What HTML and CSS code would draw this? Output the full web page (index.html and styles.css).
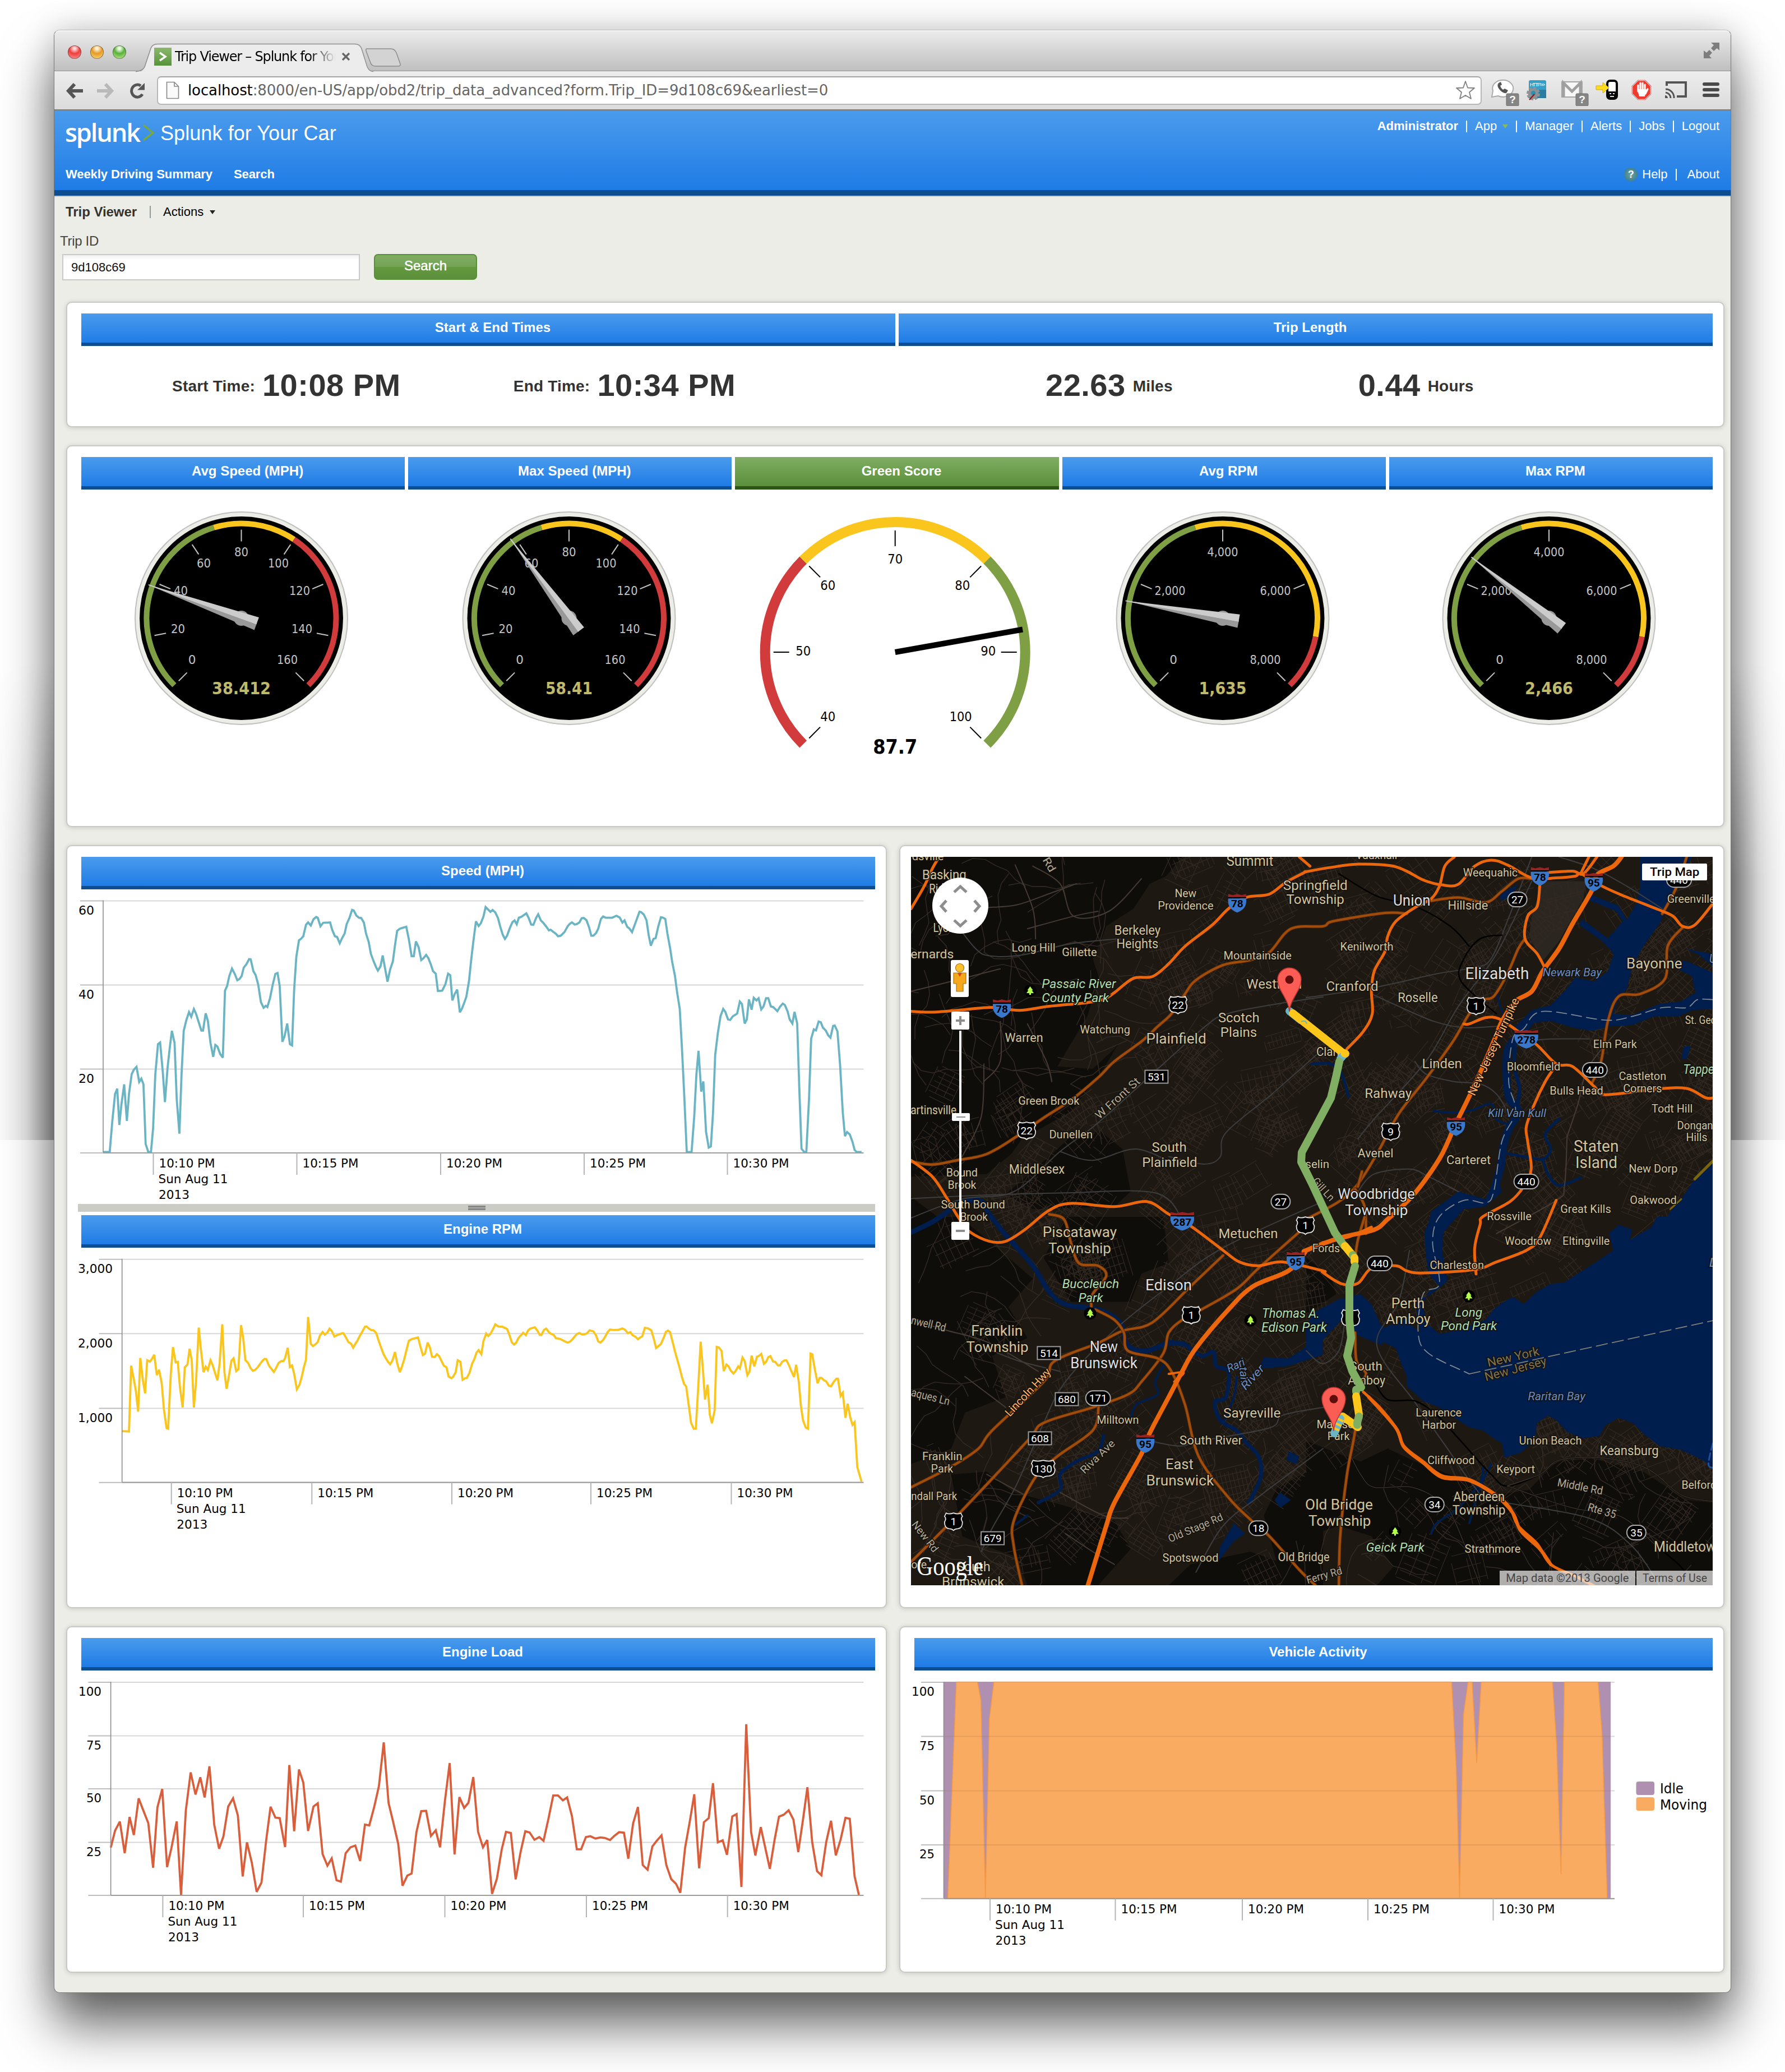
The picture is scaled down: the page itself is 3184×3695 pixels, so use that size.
FILE: index.html
```html
<!DOCTYPE html>
<html lang="en">
<head>
<meta charset="utf-8">
<title>Trip Viewer - Splunk for Your Car</title>
<link rel="stylesheet" href="styles.css">
</head>
<body>
<div class="window">
  <div class="titlebar">
    <div class="lights"><i class="light red"></i><i class="light amber"></i><i class="light green"></i></div>
    <div class="tab">
      <svg class="tab-shape" width="476" height="52" viewBox="0 0 476 52"><path d="M-30 50.500 H6 Q14 50 17 42 L28 9 Q31 2 40 2 H391 Q400 2 403 10 L414 42 Q417 50 425 50.500 H480 V54 H-30Z" fill="#ececec"/><path d="M0 50.500 Q12 50 16 42 L27 9 Q30 1.500 39 1.500 H391 Q400 1.500 403 10 L413 42 Q416 50 424 50.500" fill="none" stroke="#8f8f8f" stroke-width="1.500"/><path d="M412 10 H455 Q462 10 465 17 L472 37 Q473 41 468 41 H428 Q421 41 419 35 L411 14 Q410 10 412 10Z" fill="#d3d3d3" stroke="#8d8d8d" stroke-width="1.500"/></svg>
      <span class="favicon"><svg width="31" height="32" viewBox="0 0 31 32"><path d="M10 9 L20 16 L10 23" fill="none" stroke="#fff" stroke-width="3.500"/></svg></span>
      <span class="tab-title">Trip Viewer – Splunk for Your Car</span>
      <svg class="tab-close" width="16" height="16" viewBox="0 0 16 16"><path d="M2 2 L14 14 M14 2 L2 14" stroke="#666" stroke-width="3.200"/></svg>
    </div>
    <svg class="expand" width="30" height="30" viewBox="0 0 30 30"><path d="M14 1 H29 V15 L24.500 11 L19 16 L14 11 L19 5.500Z M1 15 L6 19 L11 14 L16 19 L11 24.500 L15 29 H1Z" fill="#7d7d7d"/></svg>
  </div>
  <div class="toolbar">
    <svg class="nav-icons" width="150" height="32" viewBox="0 0 150 32">
      <path d="M31 16 H6 M16 4 L5 16 L16 28" fill="none" stroke="#555" stroke-width="6"/>
      <path d="M56 16 H80 M71 4 L82 16 L71 28" fill="none" stroke="#b9b9b9" stroke-width="6"/>
      <path d="M137 22 A10.500 11 0 1 1 134 7" fill="none" stroke="#555" stroke-width="5"/><path d="M141 2 V14.500 H128Z" fill="#555"/>
    </svg>
    <div class="omnibox">
      <svg width="24" height="32" viewBox="0 0 24 32"><path d="M1.500 1.500 H15 L22.500 9 V30.500 H1.500Z M15 1.500 V9 H22.500" fill="#fafafa" stroke="#8b8b8b" stroke-width="1.700"/></svg>
      <span class="url"><b>localhost</b>:8000/en-US/app/obd2/trip_data_advanced?form.Trip_ID=9d108c69&amp;earliest=0</span>
      <svg width="36" height="36" viewBox="0 0 36 36"><path d="M18 2 L22 13.500 L34 14 L25 21.500 L28 33 L18 27 L8 33 L11 21.500 L2 14 L14 13.500Z" fill="#fff" stroke="#808080" stroke-width="1.800" stroke-linejoin="round"/></svg>
    </div>
    <svg class="extensions" width="424" height="56" viewBox="2653 134 424 56">
      <path d="M2661 174 L2663 163 A18.500 15 0 1 1 2672 172Z" fill="#fff" stroke="#aaa" stroke-width="2"/>
      <path d="M2673 149 Q2669 154 2675 161 Q2681 168 2687 167 L2690 162 L2684 159 L2681 161 Q2677 158 2676 154 L2679 152 L2677 147Z" fill="#555"/>
      <g id="badge"><rect x="2687" y="168" width="22" height="22" rx="2" fill="#858585" stroke="#6e6e6e"/><text x="2698" y="185" font-family="Liberation Sans" font-weight="700" font-size="19" fill="#fff" text-anchor="middle">?</text></g>
      <rect x="2727" y="144" width="31" height="32" rx="3" fill="#35a0c7"/><rect x="2727" y="161" width="31" height="15" fill="#2a7d9e"/>
      <text x="2742.500" y="155" font-family="Liberation Sans" font-size="9" fill="#fff" text-anchor="middle" textLength="27">HTTP&gt;&gt;</text>
      <circle cx="2735" cy="168" r="9.500" fill="#8f9294"/><circle cx="2735" cy="168" r="10" fill="none" stroke="#8f9294" stroke-width="4" stroke-dasharray="5 2.800"/><circle cx="2735" cy="167" r="4" fill="#2a8fb3"/><path d="M2737 169 L2728 179" stroke="#8a2020" stroke-width="2.500"/>
      <rect x="2786" y="147" width="36" height="27" fill="#f7f7f7" stroke="#a5a5a5" stroke-width="2"/><path d="M2789 174 V149 L2804 164 L2819 149 V174" fill="none" stroke="#a0a0a0" stroke-width="5"/>
      <use href="#badge" x="124"/>
      <rect x="2867" y="145" width="17" height="32" rx="5" fill="#fff" stroke="#000" stroke-width="4"/><rect x="2866" y="164" width="18" height="13" rx="4" fill="#000"/><path d="M2871 168 h3 m3 0 h3 M2872 173 h7" stroke="#ddd" stroke-width="2"/><path d="M2847 154 H2859 V148 L2870 157.500 L2859 167 V161 H2847Z" fill="#ffdc20" stroke="#d8a800"/>
      <path d="M2921 144 H2935 L2945 154 V169 L2935 179 H2921 L2911 169 V154Z" fill="#ee3a2f" stroke="#fff" stroke-width="2.500"/><path d="M2921 144 H2935 L2945 154 V169 L2935 179 H2921 L2911 169 V154Z" fill="none" stroke="#a33" stroke-width=".8"/>
      <path d="M2922 164 V153 M2926 163 V149 M2930 163 V149 M2934 163 V152 M2939 160 L2935 168" stroke="#fff" stroke-width="3.200" stroke-linecap="round"/><path d="M2920.500 160 H2937 L2934 173 H2924Z" fill="#fff"/>
      <path d="M2973 154 V148 H3007 V173 H2991" fill="none" stroke="#555" stroke-width="4"/><path d="M2971 160 A15 15 0 0 1 2986 176 M2971 166 A10 10 0 0 1 2980 176" fill="none" stroke="#555" stroke-width="3"/><path d="M2970 171 a5 5 0 0 1 5 5 h-5Z" fill="#555"/>
      <path d="M3040 151 H3064 M3040 161 H3064 M3040 171 H3064" stroke="#4a4a4a" stroke-width="6" stroke-linecap="round"/>
    </svg>
  </div>

  <header class="app-header">
    <div class="row top">
      <div class="brand"><span class="logo">splunk</span><svg width="22" height="34" viewBox="0 0 22 34"><path d="M2 4 L19 18 L2 31" fill="none" stroke="#76a844" stroke-width="3.500"/></svg><span class="app-name">Splunk for Your Car</span></div>
      <nav class="links"><strong>Administrator</strong><s></s><span>App</span><em class="caret"></em><s></s><span>Manager</span><s></s><span>Alerts</span><s></s><span>Jobs</span><s></s><span>Logout</span></nav>
    </div>
    <div class="row bottom">
      <nav class="menu"><b>Weekly Driving Summary</b><b>Search</b></nav>
      <nav class="links"><i class="help">?</i><span>Help</span><s></s><span class="about">About</span></nav>
    </div>
  </header>

  <main>
    <div class="view-row"><b>Trip Viewer</b><i class="divider"></i><span>Actions</span><i class="drop"></i></div>
    <div class="field-label">Trip ID</div>
    <div class="form-row"><div class="input">9d108c69</div><div class="button">Search</div></div>

    <section class="panel summary">
      <div class="bars two"><h2 class="bar">Start &amp; End Times</h2><h2 class="bar">Trip Length</h2></div>
      <div class="bars two">
        <div class="metrics times"><p><small>Start Time:</small><strong>10:08 PM</strong></p><p><small>End Time:</small><strong>10:34 PM</strong></p></div>
        <div class="metrics length"><p><strong>22.63</strong><small>Miles</small></p><p><strong>0.44</strong><small>Hours</small></p></div>
      </div>
    </section>

    <section class="panel gauges">
      <div class="bars five"><h2 class="bar">Avg Speed (MPH)</h2><h2 class="bar">Max Speed (MPH)</h2><h2 class="bar eco">Green Score</h2><h2 class="bar">Avg RPM</h2><h2 class="bar">Max RPM</h2></div>
      <svg id="gauges" width="2910" height="590" viewBox="145 872 2910 590"></svg>
    </section>

    <div class="columns">
      <section class="panel tall">
        <h2 class="bar">Speed (MPH)</h2>
        <svg id="speed" class="chart" width="1416" height="561" viewBox="145 1586 1416 561"></svg>
        <div class="splitter"><i></i></div>
        <h2 class="bar">Engine RPM</h2>
        <svg id="rpm" class="chart" width="1416" height="600" viewBox="145 2225 1416 600"></svg>
      </section>
      <section class="panel map-panel"><svg id="map" width="1430" height="1299" viewBox="1625 1528 1430 1299"></svg></section>
    </div>

    <div class="columns">
      <section class="panel short">
        <h2 class="bar">Engine Load</h2>
        <svg id="load" class="chart" width="1416" height="500" viewBox="145 2979 1416 500"></svg>
      </section>
      <section class="panel short">
        <h2 class="bar">Vehicle Activity</h2>
        <svg id="activity" class="chart" width="1424" height="500" viewBox="1631 2979 1424 500"></svg>
      </section>
    </div>
  </main>
</div>
<script src="app.js"></script>
</body>
</html>
```
FILE: styles.css
```css
* { box-sizing: border-box; }
body { margin: 0; background: #fff; height: 3695px; overflow: hidden; padding: 53px 0 0 96px; font-family: "Liberation Sans", Arial, sans-serif; position: relative; }
/* deeper side shadow along the middle of the window */
body::before, body::after { content: ""; position: absolute; top: 1180px; width: 96px; height: 853px; -webkit-mask-image: linear-gradient(transparent, #000 45%); mask-image: linear-gradient(transparent, #000 45%); }
body::before { left: 0; background: linear-gradient(90deg, rgba(0,0,0,.02), rgba(0,0,0,.09) 50%, rgba(0,0,0,.3)); }
body::after { right: 0; background: linear-gradient(270deg, rgba(0,0,0,.02), rgba(0,0,0,.09) 50%, rgba(0,0,0,.3)); }
h2, p { margin: 0; }
svg { display: block; flex: none; }
.window { position: relative; z-index: 1; width: 2992px; height: 3501px; border: 1px solid #777; border-top-color: #bbb; border-radius: 10px; background: #ecede6; box-shadow: 0 58px 92px rgba(0,0,0,.6), 0 0 60px rgba(0,0,0,.18); overflow: hidden; }

.titlebar { height: 73px; background: linear-gradient(#ebebeb, #bfbfbf); border-bottom: 1px solid #909090; border-top: 2px solid #f6f6f6; display: flex; align-items: flex-end; border-radius: 9px 9px 0 0; }
.lights { display: flex; gap: 16px; padding: 0 0 21px 24px; width: 145px; }
.light { width: 24px; height: 24px; border-radius: 50%; border: 1px solid rgba(0,0,0,.4); }
.red { background: radial-gradient(circle at 50% 20%, #ffd8d8 0 8%, #ec3f3c 45%, #ff9a98); }
.amber { background: radial-gradient(circle at 50% 20%, #fff2d8 0 8%, #e59a26 45%, #ffe07c); }
.green { background: radial-gradient(circle at 50% 20%, #efffe4 0 8%, #5bae3c 45%, #c2f390); }
.tab { width: 476px; height: 49px; position: relative; display: flex; align-items: center; padding-left: 33px; padding-bottom: 1px; }
.tab-shape { position: absolute; left: 0; top: 0; z-index: 0; overflow: hidden; }
.favicon { position: relative; width: 31px; height: 32px; background: linear-gradient(#8cb86c, #57933a); }
.tab-title { position: relative; margin-left: 6px; width: 290px; overflow: hidden; white-space: nowrap; font: 24px/34px "DejaVu Sans", sans-serif; letter-spacing: -1.2px; color: #000; -webkit-mask-image: linear-gradient(90deg, #000 82%, transparent 99%); mask-image: linear-gradient(90deg, #000 82%, transparent 99%); }
.tab-close { position: relative; margin-left: 7px; }
.expand { margin-left: auto; margin-right: 19px; margin-bottom: 21px; }

.toolbar { height: 70px; background: linear-gradient(#ededed, #dcdcdc); border-bottom: 2px solid #7b7b7b; display: flex; align-items: center; }
.nav-icons { margin-left: 20px; margin-top: 2px; }
.omnibox { margin-left: 13px; width: 2363px; height: 51px; background: #fff; border: 2px solid #b7b7b7; border-top-color: #a5a5a5; border-radius: 7px; display: flex; align-items: center; padding: 0 9px 0 14px; }
.url { flex: 1; margin-left: 15px; font: 26px/40px "DejaVu Sans", sans-serif; letter-spacing: -.12px; color: #666; white-space: nowrap; }
.url b { font-weight: 400; color: #000; }
.extensions { margin-left: 10px; }

.app-header { height: 154px; background: linear-gradient(#4a9bec, #1f7ce6) 0 0 / 100% 142px no-repeat #0d4d92; border-bottom: 2px solid #c9cac5; color: #fff; font-size: 22px; }
.row { display: flex; justify-content: space-between; padding: 0 20px; }
.row.top { height: 92px; }
.row.bottom { height: 44px; align-items: center; }
.brand { display: flex; align-items: center; height: 82px; }
.logo { font: 600 45px/60px "Open Sans", sans-serif; letter-spacing: -2.1px; width: 138px; margin: -4px 0 0 -1px; }
.brand svg { margin-top: -4px; }
.app-name { font-size: 36px; margin-left: 10px; letter-spacing: .08px; }
.links { display: flex; align-items: center; }
.row.top .links { height: 56px; }
.links s { width: 2px; height: 21px; background: #fff; margin: 0 14px; }
.caret { border: 5px solid transparent; border-top: 7px solid #8cba5a; border-bottom: 0; margin-left: 10px; }
.menu { display: flex; gap: 38px; }
.menu b { letter-spacing: -.08px; }
.help { width: 24px; height: 24px; border-radius: 50%; background: radial-gradient(#6aa3ac, #33757f); font: 700 18px/24px "Liberation Sans"; text-align: center; margin-right: 8px; }
.about { margin-left: 5px; }

main { padding: 5px 11px 0 21px; }
.view-row { height: 44px; display: flex; align-items: center; font-size: 22px; color: #000; margin-left: -1px; }
.view-row b { font-size: 24px; color: #333; letter-spacing: -.05px; }
.divider { width: 2px; height: 22px; background: #8f9a9c; margin: 0 22px 0 23px; }
.drop { border: 5px solid transparent; border-top: 7px solid #222; border-bottom: 0; margin-left: 11px; }
.field-label { height: 53px; margin-left: -11px; font-size: 24px; line-height: 60px; color: #444; letter-spacing: -.3px; }
.form-row { display: flex; margin-left: -7px; height: 47px; gap: 25px; margin-bottom: 38px; }
.input { width: 531px; height: 47px; border: 2px solid #c9c9c9; background: linear-gradient(#f0f0f0, #fff 9px); font-size: 22px; line-height: 43px; padding-left: 14px; color: #111; }
.button { width: 184px; height: 46px; border: 2px solid #5a8f3a; border-radius: 7px; background: linear-gradient(#80ad63, #74a354 50%, #65993f 51%, #5b8f3b); color: #fff; font-size: 24px; line-height: 37px; text-align: center; -webkit-text-stroke: .5px #fff; }

.panel { background: #fff; border: 2px solid #c9c9c6; border-radius: 10px; box-shadow: 0 1px 8px rgba(0,0,0,.16); padding: 19px 19px 0 25px; }
.bars { display: grid; column-gap: 6px; }
.two { grid-template-columns: 1fr 1fr; }
.five { grid-template-columns: repeat(5, 1fr); }
.bar { height: 58px; border-bottom: 6px solid #0d4d92; background: linear-gradient(#4a9bec, #1f7ce6); color: #fff; font-size: 24px; font-weight: 700; line-height: 50px; text-align: center; letter-spacing: 0; padding-left: 16px; }
.bar.eco { background: linear-gradient(#80ad63, #5b8f3b); border-color: #2c5415; }
.summary { height: 224px; margin-bottom: 32px; }
.metrics { display: flex; padding-top: 38px; color: #333; }
.metrics p { display: flex; align-items: center; gap: 13px; white-space: nowrap; }
.metrics strong { font-size: 56px; line-height: 64px; letter-spacing: .5px; }
.metrics small { font-size: 28px; font-weight: 700; letter-spacing: .2px; padding-top: 4px; }
.times { padding-left: 162px; gap: 201px; }
.length { padding-left: 262px; gap: 331px; }
.gauges { height: 681px; margin-bottom: 32px; }
.columns { display: grid; grid-template-columns: 1464px 1472px; column-gap: 22px; margin-bottom: 32px; }
.chart { overflow: visible; }
.tall, .map-panel { height: 1361px; }
.short { height: 618px; }
.map-panel { padding-left: 19px; }
.splitter { height: 14px; margin: 0 0 6px -6px; background: #cbccc6; display: flex; justify-content: center; align-items: center; }
.splitter i { width: 31px; height: 8px; background: #aaa; border: solid #868684; border-width: 3px 0; }
```
FILE: app.js
```js
const NS = 'http://www.w3.org/2000/svg';
const UI = '"DejaVu Sans", sans-serif';
const $ = id => document.getElementById(id);

function add(parent, tag, attrs, text) {
  const e = document.createElementNS(NS, tag);
  for (const k in attrs) e.setAttribute(k, attrs[k]);
  if (text !== undefined) e.textContent = text;
  parent.appendChild(e);
  return e;
}
const line = (p, x1, y1, x2, y2, stroke, w) => add(p, 'line', { x1, y1, x2, y2, stroke, 'stroke-width': w });
function label(p, x, y, text, size, width, fill, anchor, extra) {
  const a = Object.assign({ x, y: y - 1, 'font-family': UI, 'font-size': size, fill: fill || '#000', 'text-anchor': anchor || 'start' }, extra);
  if (width) { a.textLength = width; a.lengthAdjust = 'spacingAndGlyphs'; }
  return add(p, 'text', a, text);
}
const nums = s => s.trim().split(/\s+/).map(p => p.split(',').map(Number));

/* ---------- gauges ---------- */
const polar = (cx, cy, r, deg) => [cx + r * Math.sin(deg * Math.PI / 180), cy - r * Math.cos(deg * Math.PI / 180)];
function arc(p, cx, cy, r, a, b, stroke, w) {
  const s = polar(cx, cy, r, a), e = polar(cx, cy, r, b);
  add(p, 'path', { d: `M${s} A${r} ${r} 0 ${b - a > 180 ? 1 : 0} 1 ${e}`, fill: 'none', stroke, 'stroke-width': w });
}
const GREEN = '#7e9f44', YELLOW = '#fac51c', RED = '#d13b3b';
function dial(cx, max, step, bounds, value, shown, marks) {
  const g = $('gauges'), cy = 1101.500, ang = v => -135 + v / max * 270;
  add(g, 'circle', { cx, cy, r: 189.5, fill: '#ecede6', stroke: '#bfbfbf', 'stroke-width': 2 });
  add(g, 'circle', { cx, cy, r: 181.5, fill: '#000' });
  let from = 0;
  [[bounds[0], GREEN], [bounds[1], YELLOW], [max, RED]].forEach(b => { arc(g, cx, cy, 169, ang(from), ang(b[0]), b[1], 10); from = b[0]; });
  for (let v = 0; v <= max; v += step) {
    const a = polar(cx, cy, 158, ang(v)), b = polar(cx, cy, 137, ang(v));
    line(g, a[0], a[1], b[0], b[1], '#c4c4c4', 2);
  }
  marks.forEach(m => label(g, cx + m[1], cy + m[2], m[0], 21.5, m[3], '#c4c4c4', 'middle'));
  add(g, 'circle', { cx, cy, r: 13.5, fill: '#999' });
  const n = add(g, 'g', { transform: `translate(${cx} ${cy}) rotate(${ang(value)})` });
  add(n, 'path', { d: 'M0 -178 L-12 29 L0 29Z', fill: '#999' });
  add(n, 'path', { d: 'M0 -178 L12 29 L-1 29Z', fill: '#ccc' });
  add(n, 'path', { d: 'M-1 -176 H1 L2 0 L1 29 H-1Z', fill: '#ccc' });
  label(g, cx, cy + 136, shown[0], 30, shown[1], '#bfb96b', 'middle', { 'font-weight': 700 });
}
const mph = [['0', -88, 82], ['20', -113, 27, 25], ['40', -108, -41, 25], ['60', -67, -90, 25], ['80', 0, -110, 25], ['100', 66, -90, 37], ['120', 104, -41, 37], ['140', 108, 27, 37], ['160', 82, 82, 37]];
const rev = [['0', -88, 82], ['2,000', -94, -41, 55], ['4,000', 0, -110, 55], ['6,000', 94, -41, 55], ['8,000', 76, 82, 55]];
dial(430.5, 160, 20, [70, 100], 38.412, ['38.412', 105], mph);
dial(1015, 160, 20, [70, 100], 58.41, ['58.41', 84], mph);
dial(2181, 8000, 2000, [3500, 7000], 1635, ['1,635', 85], rev);
dial(2763, 8000, 2000, [3500, 7000], 2466, ['2,466', 86], rev);
(function () {
  const g = $('gauges'), cx = 1596.700, cy = 1162;
  arc(g, cx, cy, 232, -135, -45, RED, 18);
  arc(g, cx, cy, 232, -45, 45, YELLOW, 18);
  arc(g, cx, cy, 232, 45, 135, GREEN, 18);
  for (let a = -135; a <= 135; a += 45) { const s = polar(cx, cy, 217, a), e = polar(cx, cy, 189, a); line(g, s[0], s[1], e[0], e[1], '#000', 2); }
  [['70', 0, -157.5, 27], ['60', -120, -110, 27], ['50', -164, 6.5, 27], ['40', -120, 124, 27], ['80', 120, -110, 27], ['90', 166, 6.5, 27], ['100', 117, 124, 40]]
    .forEach(m => label(g, cx + m[1], cy + m[2], m[0], 23, m[3], '#000', 'middle'));
  const t = polar(cx, cy, 231, 79.900);
  line(g, cx, cy, t[0], t[1], '#000', 10);
  label(g, cx, 1344, '87.7', 36, 79, '#000', 'middle', { 'font-weight': 700 });
})();

/* ---------- time charts ---------- */
function frame(svg, o) {
  o.grid.forEach(g => { line(svg, o.left, g[0], o.axis, g[0], '#bdbdbd', 2); line(svg, o.axis, g[0], o.right, g[0], '#d8d8d8', 2); });
}
function axes(svg, o) {
  o.grid.forEach(g => label(svg, o.labelRight, g[0] + 25.300, g[1], 21.500, g[2], '#000', 'end'));
  line(svg, o.axis, o.grid[0][0] - 1, o.axis, o.base, '#8c8c8c', 1.600);
  line(svg, o.left, o.base, o.axis, o.base, '#bdbdbd', 2);
  line(svg, o.axis, o.base, o.right, o.base, '#9c9c9c', 2.200);
  o.ticks.forEach((x, i) => {
    line(svg, x, o.base, x, o.base + 39, '#b5b5b5', 2);
    label(svg, x + 10, o.base + 27, '10:' + (10 + i * 5) + ' PM', 21.500, 100);
  });
  label(svg, o.ticks[0] + 9, o.base + 55, 'Sun Aug 11', 21.500, 124);
  label(svg, o.ticks[0] + 9.500, o.base + 83, '2013', 21.500, 55);
}
function series(svg, s, ox, oy, sx, sy, color) {
  add(svg, 'polyline', { points: nums(s).map(p => [(ox + p[0] * sx).toFixed(1), (oy + p[1] * sy).toFixed(1)]).join(' '), fill: 'none', stroke: color, 'stroke-width': 3.800, 'stroke-linejoin': 'miter', 'stroke-miterlimit': 3 });
}

const speed = `88,1278 100,1278 105,1150 110,1040 114,1018 118,1167 122,1080 127,1000 132,1150 136,1040 141,958 145,940 150,928 155,990 159,977 163,1000 167,1245 172,1278 177,1278 181,1180 185,960 190,835 194,828 199,950 203,1073 208,930 212,850 216,780 221,830 225,1060 230,1203 234,960 238,780 243,735 248,703 252,722 257,690 261,710 266,745 271,779 274,779 279,708 283,738 288,830 293,887 297,838 301,845 306,875 311,890 315,615 319,595 323,555 328,524 333,545 338,572 342,567 346,555 350,520 355,506 360,485 363,486 368,535 372,550 377,590 382,662 387,685 391,677 394,682 399,645 404,590 409,546 413,542 417,595 422,825 426,803 431,750 436,835 440,840 444,610 448,475 453,408 457,401 461,391 466,344 470,334 475,347 480,321 485,312 488,315 493,350 498,336 502,335 506,335 511,334 515,365 520,391 524,394 529,420 533,400 538,380 542,340 547,316 552,283 555,285 560,306 565,315 569,316 574,335 578,380 583,415 587,463 592,493 597,520 600,532 605,515 609,470 614,530 618,578 623,527 628,495 632,428 636,369 641,360 647,356 653,352 658,405 663,473 667,473 671,412 676,436 681,489 685,482 690,468 694,480 699,508 703,535 708,545 712,616 720,615 726,588 731,545 735,551 739,655 743,630 748,610 753,704 757,688 761,665 765,640 770,575 774,490 778,415 783,330 788,349 792,338 797,310 801,271 805,280 810,291 814,283 819,293 824,316 828,350 833,385 837,402 841,389 846,358 851,333 855,326 859,342 863,315 868,311 873,303 877,297 881,315 886,343 890,344 895,316 899,301 904,326 909,337 914,351 919,367 922,364 927,373 932,381 936,391 941,389 948,374 954,350 958,340 962,334 967,343 971,341 976,334 980,317 984,316 989,325 994,355 998,389 1002,389 1007,378 1011,360 1016,320 1020,310 1025,315 1037,315 1045,307 1051,314 1056,335 1060,326 1065,352 1069,359 1074,374 1078,350 1083,320 1088,290 1091,292 1096,302 1101,325 1105,385 1109,430 1114,402 1118,399 1123,350 1128,313 1131,314 1136,320 1140,380 1145,440 1149,498 1154,553 1158,620 1163,690 1167,850 1171,1030 1176,1278 1185,1278 1190,1130 1194,960 1198,862 1203,1030 1207,988 1212,1195 1217,1260 1221,1255 1225,1120 1229,880 1234,790 1239,720 1244,690 1248,702 1253,733 1257,735 1262,720 1270,709 1275,660 1279,670 1284,750 1288,733 1292,651 1297,693 1301,644 1306,655 1310,646 1315,692 1319,680 1324,646 1328,646 1333,680 1337,682 1341,690 1345,699 1350,681 1355,668 1359,674 1364,700 1368,733 1373,750 1377,702 1382,750 1386,1020 1390,1265 1395,1278 1399,1278 1404,1060 1408,812 1413,774 1417,778 1422,742 1426,745 1430,767 1435,778 1440,799 1444,808 1449,760 1452,758 1457,782 1462,920 1467,1115 1471,1213 1475,1196 1480,1206 1485,1236 1489,1270 1493,1278 1502,1278`;
const sp = { axis: 184, left: 143, right: 1540.500, base: 2056, labelRight: 168, grid: [[1606.500, '60', 28], [1756.500, '40', 28], [1906.500, '20', 28]], ticks: [273.500, 529.500, 786, 1042, 1297.500] };
frame($('speed'), sp); series($('speed'), speed, 100, 1500, .9566, .4337, '#6ab4c4'); axes($('speed'), sp);

const rpm = `123,871 136,872 140,630 145,680 149,725 153,799 157,602 162,685 166,732 170,610 175,615 179,605 183,590 188,665 192,645 197,695 201,790 206,860 209,862 214,660 218,562 223,618 227,616 231,710 236,784 240,636 245,626 249,568 253,610 257,784 261,690 266,490 270,570 275,654 279,634 283,646 288,610 292,628 297,660 301,684 305,620 310,478 314,655 318,715 323,660 327,612 331,603 336,650 340,643 345,481 349,530 353,610 358,620 363,640 367,649 371,646 376,636 380,625 385,612 389,605 392,606 397,630 401,640 406,653 410,640 415,620 420,613 424,613 427,602 432,564 436,635 440,629 444,660 449,717 454,700 458,672 462,637 466,608 470,451 475,550 479,558 484,551 488,543 492,520 497,506 501,516 506,508 510,494 514,502 519,523 524,518 533,511 536,511 541,528 545,543 550,549 554,564 558,550 562,538 567,518 571,505 576,487 579,486 584,495 588,499 592,500 597,510 601,535 606,563 610,585 614,600 619,616 623,625 627,612 632,580 636,620 641,654 645,633 649,608 654,568 658,538 664,532 675,526 679,557 684,591 688,586 693,545 697,563 701,597 706,598 710,588 714,594 719,614 723,630 728,636 732,670 737,676 740,672 745,655 749,610 754,616 758,682 763,676 766,675 771,656 776,622 780,606 784,582 788,573 793,588 797,540 802,512 806,521 810,513 815,495 819,478 825,486 832,487 841,495 845,515 850,545 854,552 858,545 862,529 867,518 871,509 876,518 880,501 884,494 893,489 897,500 902,517 905,517 910,498 914,494 919,507 923,513 928,517 932,529 936,530 941,533 949,541 954,545 959,541 963,533 967,523 971,514 976,510 980,515 985,515 990,511 995,500 1002,504 1007,519 1011,541 1015,545 1020,536 1024,523 1029,505 1033,497 1040,499 1049,498 1056,493 1061,498 1066,510 1071,507 1075,518 1080,523 1085,533 1089,527 1093,522 1098,491 1104,493 1110,500 1115,535 1119,565 1124,557 1128,550 1133,528 1137,506 1141,501 1145,507 1150,545 1154,577 1158,605 1163,640 1167,672 1171,697 1175,707 1180,780 1184,840 1189,862 1193,862 1198,690 1202,542 1206,640 1210,755 1215,700 1219,810 1223,842 1228,795 1232,561 1236,563 1241,576 1245,650 1250,626 1254,633 1258,648 1263,659 1267,650 1272,633 1275,640 1280,600 1284,613 1289,665 1293,652 1297,593 1302,633 1307,597 1311,594 1315,587 1320,623 1324,616 1328,599 1332,595 1337,615 1341,616 1346,629 1350,629 1354,616 1358,611 1362,610 1367,630 1371,650 1376,672 1380,627 1385,690 1389,780 1393,832 1398,858 1402,862 1407,586 1410,588 1415,645 1420,695 1424,675 1427,675 1432,684 1436,688 1441,704 1445,706 1450,690 1455,678 1458,678 1463,741 1467,730 1472,822 1476,770 1481,820 1485,848 1489,838 1494,1003 1502,1057`;
const rp = { axis: 217.700, left: 176.500, right: 1540.500, base: 2643.700, labelRight: 201, grid: [[2245.700, '3,000', 62], [2378.200, '2,000', 62], [2511.500, '1,000', 62]], ticks: [305.700, 556.300, 806, 1054, 1304.500] };
frame($('rpm'), rp); series($('rpm'), rpm, 100, 2130, .9566, .4847, '#fac51c'); axes($('rpm'), rp);

const load = `102,798 110,740 119,709 128,817 137,693 145,755 154,629 163,672 172,714 181,867 189,660 198,597 207,865 215,800 225,708 233,960 242,670 251,540 260,616 269,557 277,626 286,519 295,720 304,802 312,760 321,657 330,629 339,688 348,897 356,780 365,850 374,950 383,918 392,770 400,658 409,695 417,697 427,796 435,515 444,742 453,530 461,575 470,741 480,657 488,646 497,820 506,860 514,835 523,910 531,915 540,817 549,797 558,791 567,844 576,719 584,722 593,660 602,587 611,437 620,645 628,705 638,785 646,929 655,894 663,887 672,745 681,673 690,672 699,758 708,739 716,797 725,640 734,508 743,821 752,625 761,662 769,644 778,556 787,744 796,797 804,772 813,957 822,905 831,805 839,744 848,748 857,907 866,815 875,742 883,746 892,771 901,762 909,775 918,700 927,619 936,619 945,636 953,626 962,690 971,804 979,804 988,762 996,759 1006,767 1015,763 1023,765 1033,772 1041,758 1050,745 1059,747 1067,836 1076,715 1085,659 1094,858 1103,874 1112,794 1120,775 1129,756 1138,858 1147,906 1156,922 1164,953 1173,798 1182,705 1190,615 1199,869 1208,711 1217,697 1225,577 1234,780 1243,773 1251,823 1261,691 1269,683 1278,933 1287,375 1296,745 1304,825 1314,728 1322,795 1331,871 1340,770 1348,692 1357,685 1366,670 1375,702 1384,813 1393,700 1401,591 1410,780 1419,879 1427,893 1436,780 1445,706 1454,825 1463,770 1472,696 1480,699 1489,897 1497,960`;
const ld = { axis: 197.600, left: 157.400, right: 1540.500, base: 3380, labelRight: 181, grid: [[3000, '100', 41], [3095.500, '75', 27], [3190, '50', 27], [3285.500, '25', 27]], ticks: [290.400, 541, 793.500, 1046, 1297.700] };
frame($('load'), ld); series($('load'), load, 100, 2880, .9566, .5198, '#d95e3c'); axes($('load'), ld);

(function () {
  const s = $('activity');
  const ac = { axis: 1683.500, left: 1643, right: 2880, base: 3385.800, labelRight: 1667, grid: [[3000, '100', 41], [3096.500, '75', 27], [3193.500, '50', 27], [3290, '25', 27]], ticks: [1766, 1989.500, 2216, 2440, 2663.500] };
  frame(s, ac);
  add(s, 'rect', { x: 1683.500, y: 2999, width: 1189.500, height: 386, fill: '#b090b0' });
  const d = nums('99,972 114,230 151,230 157,292 165,972 172,355 180,230 983,230 991,525 997,972 1004,340 1012,230 1019,230 1027,508 1035,230 1160,230 1167,440 1175,890 1181,230 1240,230 1247,410 1256,972').map(p => [1590 + p[0] * 1.0166, 2880 + p[1] * .5198]);
  add(s, 'polygon', { points: d.join(' '), fill: '#f9ab62', stroke: '#f39a48', 'stroke-width': 1.500 });
  [3096.500, 3193.500, 3290].forEach(y => line(s, 1684, y, 2873, y, 'rgba(160,110,60,.2)', 2));
  axes(s, ac);
  add(s, 'rect', { x: 2918.500, y: 3177, width: 32.500, height: 24, rx: 4, fill: '#b090b0' });
  add(s, 'rect', { x: 2918.500, y: 3205, width: 32.500, height: 24, rx: 4, fill: '#f9ab62' });
  label(s, 2961, 3199, 'Idle', 24, 42);
  label(s, 2961, 3227.500, 'Moving', 24, 84);
})();

/* ---------- trip map ---------- */
const tiles = { A: [1600, 1500, .4847, .4464], B: [2330, 1500, .4847, .4464], C: [1600, 2170, .4847, .4592], D: [2330, 2170, .4847, .4592] };
const at = (t, x, y) => [+(tiles[t][0] + x * tiles[t][2]).toFixed(1), +(tiles[t][1] + y * tiles[t][3]).toFixed(1)];
/* "A 1,2 3,4 B 5,6": the letter picks the tile for the points after it */
function track(s) {
  let t = 'A'; const out = [];
  s.trim().split(/\s+/).forEach(w => { if (w.length === 1) t = w; else { const p = w.split(','); out.push(at(t, +p[0], +p[1])); } });
  return out;
}
function smooth(p) {
  let d = `M${p[0]}`;
  for (let i = 0; i < p.length - 1; i++) {
    const a = p[i - 1] || p[i], b = p[i], c = p[i + 1], e = p[i + 2] || c;
    d += ` C${b[0] + (c[0] - a[0]) / 6} ${b[1] + (c[1] - a[1]) / 6} ${c[0] - (e[0] - b[0]) / 6} ${c[1] - (e[1] - b[1]) / 6} ${c}`;
  }
  return d;
}
const map = $('map');
const stroke = (s, color, w, extra) => add(map, 'path', Object.assign({ d: smooth(track(s)), fill: 'none', stroke: color, 'stroke-width': w, 'stroke-linecap': 'round', 'stroke-linejoin': 'round' }, extra));
const area = (s, fill) => add(map, 'polygon', { points: track(s).join(' '), fill });

add(map, 'rect', { x: 1625, y: 1528, width: 1430, height: 1299, fill: '#1d1912' });
['A 52,63 1050,63 990,140 930,170 870,270 770,340 750,400 720,470 745,550 700,700 590,900 720,910 800,830 820,800 760,910 640,1080 460,1190 420,1250 330,1330 52,1340',
 'A 640,1180 750,1160 830,1230 860,1400 800,1460 500,1470 400,1410 560,1260', 'A 52,1420 230,1568 52,1568',
 'C 52,0 230,0 340,95 500,240 410,350 480,470 350,540 400,700 250,760 200,900 52,960',
 'C 620,0 980,0 1000,180 900,220 860,330 760,330 640,330 540,160', 'C 200,1000 330,990 430,1070 610,1120 800,1180 860,1290 740,1431 480,1431 440,1320 330,1280 240,1240',
 'C 1568,960 1400,1050 1350,1160 1400,1350 1568,1431', 'D 0,870 120,920 200,950 300,900 420,960 580,1020 700,1080 820,1060 920,950 1060,940 1240,990 1400,1100 1496,1110 1496,1431 260,1431 320,1360 240,1240 120,1200 0,1240',
 'C 1080,1350 1300,1300 1568,1400 1568,1431 1000,1431', 'D 0,160 90,230 110,300 0,380'].forEach(s => area(s, '#0e0d09'));
area('B 870,160 1030,160 1020,230 930,400 870,480 820,380 830,300', '#2b2620');

let seed = 7;
const rnd = () => (seed = (seed * 16807) % 2147483647) / 2147483647;
for (let i = 0; i < 640; i++) {
  const x = 1625 + rnd() * 1430, y = 1528 + rnd() * 1299;
  const rural = (x < 2000 && y < 1950) || (x < 1850 && y > 2200 && rnd() < .7) || (y > 2640 && rnd() < .5);
  if (rural) {
    let px = x, py = y, d = `M${x} ${y}`, a = rnd() * 6.280;
    for (let k = 0; k < 6; k++) { a += (rnd() - .5) * 1.200; px += Math.cos(a) * 22; py += Math.sin(a) * 22; d += ` L${px.toFixed(1)} ${py.toFixed(1)}`; }
    add(map, 'path', { d, fill: 'none', stroke: '#352b26', 'stroke-width': 1.400 });
    continue;
  }
  const w = 30 + rnd() * 65, h = 25 + rnd() * 50, st = 7 + rnd() * 8;
  let d = '';
  for (let u = 0; u <= w; u += st) if (rnd() > .15) d += `M${u.toFixed(1)} ${(rnd() * 12).toFixed(1)}V${(h - rnd() * 12).toFixed(1)}`;
  for (let v = 0; v <= h; v += st * 1.700) d += `M${(rnd() * 12).toFixed(1)} ${v.toFixed(1)}H${(w - rnd() * 12).toFixed(1)}`;
  add(map, 'path', { d, transform: `translate(${x.toFixed(0)} ${y.toFixed(0)}) rotate(${(-70 + rnd() * 60).toFixed(0)})`, fill: 'none', stroke: '#332923', 'stroke-width': 1.200 });
}

const WATER = '#001e4d';
area('B 1228,63 1420,63 1370,180 1340,240 1300,330 1240,420 1200,500 1180,590 1150,625 1130,690 1200,695 1300,650 1380,640 1440,600 1496,605 1496,670 1420,675 1370,700 1280,700 1200,735 1120,740 1050,758 980,745 900,718 840,725 790,790 755,800 770,740 830,675 900,655 950,600 990,545 1060,560 1110,520 1132,450 1090,400 1005,335 1015,312 1110,388 1165,320 1140,280 1040,235 1050,215 1150,258 1180,315 1215,250 1230,180', WATER);
area('B 1325,478 1400,480 1496,525 1496,610 1430,600 1420,540 1350,500', WATER);
area('B 1395,430 1496,450 1496,500 1440,450', WATER);
area('B 1390,820 1415,820 1400,870 1380,870', WATER);
area('B 710,215 780,170 760,210 720,240', WATER);
area('B 1496,1275 1430,1350 1380,1430 1340,1480 1290,1568 1496,1568', WATER);
area('D 1496,0 1290,0 1270,40 1190,90 1200,50 1150,30 1115,70 1130,130 1060,180 1000,220 950,255 900,260 850,290 800,338 760,310 720,335 690,360 660,400 560,440 490,455 440,410 430,340 450,290 490,270 450,220 440,150 435,60 460,0 510,0 500,130 520,250 460,300 400,330 420,450 360,395 290,430 250,400 200,440 270,480 330,510 350,570 370,620 372,660 430,715 490,740 560,790 600,818 650,830 690,860 720,880 730,935 790,915 840,870 850,800 890,772 920,790 960,835 1020,860 1080,850 1100,810 1150,780 1200,800 1250,850 1300,890 1380,905 1450,940 1496,970', WATER);
area('D 240,340 200,300 120,320 30,370 0,420 0,540 60,480 130,400 190,460 280,500 270,410', WATER);
area('C 1568,400 1500,510 1440,550 1350,545 1330,590 1440,580 1568,535', WATER);
area('B 560,1400 660,1430 700,1330 720,1400 660,1460 580,1470 500,1568 440,1568 460,1480', WATER);
area('B 1110,1568 1150,1535 1200,1568', WATER);
stroke('B 770,790 740,840 738,960 748,1030 780,1080 745,1150 725,1220 715,1300 690,1400', WATER, 14);
stroke('B 770,790 765,900 785,990 770,1080', WATER, 7);
stroke('B 470,1078 540,1085 610,1075 680,1050 700,1110 740,1130', WATER, 4);
stroke('B 725,1245 800,1260 870,1270 900,1230 880,1170 930,1110', WATER, 5);
stroke('B 870,1270 890,1330 930,1375 1010,1345', WATER, 5);
stroke('B 20,890 90,890 130,930 155,1020', WATER, 5);
stroke('B 700,600 720,680 760,740', WATER, 3);
stroke('C 52,60 130,20 200,-30 240,-60 310,-60 340,-10 400,70 500,190 560,290 620,340 740,360 820,410 850,500 920,520 1000,490 1060,495', WATER, 9);
stroke('C 1060,495 1120,540 1165,525 1175,580 1220,600 1210,700 1170,720 1190,790 1250,830 1280,870 1330,930 1340,1000 1320,1060 1295,1110', WATER, 7);
stroke('C 1250,620 1240,700 1200,800', WATER, 4);
stroke('C 990,560 950,640 960,690 880,730 860,790', WATER, 4);
stroke('C 760,850 740,910 660,950 600,1000 600,1060 520,1110', WATER, 6);
stroke('C 480,1160 430,1200', WATER, 4);
area('C 1240,1190 1280,1230 1240,1260 1180,1340 1190,1280', WATER);
area('C 1410,1070 1450,1100 1410,1130 1390,1100', WATER);
area('C 1440,910 1480,930 1470,960 1435,945', WATER);
stroke('D 650,970 640,1030 560,1130 480,1190 460,1230', WATER, 4);
stroke('D 680,960 640,1050 600,1190', WATER, 4);
stroke('B 1496,1278 1430,1350', '#7a640e', 5);
stroke('B 1380,1430 1340,1470', '#7a640e', 3);

const RAIL = '#3d3d3f';
['A 52,1428 300,1415 620,1405 950,1405 1050,1510', 'A 52,1505 240,1430 430,1400 600,1240 740,1125 980,890 1140,735 1220,688 1400,650 1568,622', 'B 0,625 250,585 480,530 620,505 680,470 740,320 830,63', 'A 1568,830 1380,1010 1210,1165 1190,1260 1130,1290 1000,1260', 'B 830,160 700,450 560,660 440,880 250,1110 190,1190',
 'A 600,1240 720,1275 880,1230 1020,1290', 'A 230,350 290,430 340,458 460,455 640,410 820,390', 'C 1568,-60 1200,120 1000,270 800,440 620,640 540,800 440,1040 350,1210 310,1300', 'C 350,520 450,560 600,600', 'C 930,870 1040,890 1120,870 1370,820 1420,770 1568,740', 'C 1568,900 1340,1080 1200,1200 1100,1380',
 'D 0,520 60,570 120,520 140,420', 'D 380,130 340,330 260,500 400,720 520,900 620,1050 690,1100 1040,1170 1200,1280 1300,1431', 'B 400,880 440,930 540,960 640,970 700,1010 740,1080', 'B 240,610 340,660 470,720 580,745 700,740', 'B 800,800 900,790 1040,790', 'B 930,63 1060,110 1180,180 1310,270', 'B 190,1400 250,1330 380,1310 450,1340 560,1400'].forEach(s => stroke(s, RAIL, 2));
['D 160,920 200,1000 250,1050 390,1050 500,1110 550,1190 640,1431', 'D 250,640 300,710 400,715 480,770 560,860 680,1000 740,1045 860,1000 930,945 1080,935 1250,975 1380,1080 1496,1105', 'D 740,1045 900,1105 1000,1135 1160,1165 1280,1270 1380,1360 1420,1431', 'B 120,130 260,220 400,260 530,340 600,420', 'B 720,375 640,390 580,470 570,560 700,690'].forEach(s => stroke(s, '#000', 2.500));
['D 160,920 200,1000 250,1050 390,1050 500,1110 550,1190 640,1431', 'D 740,1045 860,1000 930,945 1080,935 1250,975 1380,1080 1496,1105', 'D 740,1045 900,1105 1000,1135 1160,1165 1280,1270'].forEach(s => stroke(s, '#3b332c', 1.500));
['A 435,95 500,270 510,390', 'A 500,100 600,170 650,300 780,280 900,150', 'A 480,350 650,300 740,280', 'A 335,265 440,255 560,210 660,170', 'A 52,600 200,560 380,510', 'A 320,890 310,1100 240,1260', 'A 380,720 380,880 320,960', 'A 480,730 550,880 570,960', 'C 52,400 180,440 340,490 520,600', 'C 250,620 400,740', 'C 330,1000 470,1080', 'C 600,1070 760,1160 850,1170', 'C 620,1230 720,1300 800,1350', 'B 960,1180 950,1380 920,1435 700,1568', 'B 1160,740 1040,900 1000,1050 960,1180'].forEach(s => stroke(s, '#453a34', 2));

const DIM = '#a04d0c', HOT = '#ec660b';
['A 52,1280 130,1292 220,1275 330,1250 440,1180 540,1105 640,1035 740,945 800,880 900,800 960,740 1010,690 1060,610 1100,555 1200,495 1300,475 1370,445 1450,350 1568,340 B 100,320 290,287 370,290',
 'B 1400,63 1360,190 1310,290', 'B 1385,345 1330,420 1320,550 1230,610 1150,620 1110,720 1085,880 1050,970', 'B 805,390 780,430 740,530 690,620 650,635 600,690 540,800 440,950 340,1090 260,1250 190,1370 120,1440 0,1510', 'B 180,1390 215,1460 220,1568', 'B 190,1380 205,1320',
 'C 1500,40 1330,200 1250,280 1120,360 1050,400 1000,450 980,530 900,640 850,690 720,740 540,800 480,870 240,1140 52,1340', 'C 1200,150 1080,270 940,410 830,443 740,490 580,560 540,640 350,830 300,900 200,970 52,1050',
 'C 730,360 800,400 835,450 850,520 960,550 1010,600 1060,730 1110,930 1220,1090 1300,1175 1370,1240 1480,1370 1540,1431', 'C 742,740 720,830 590,930 510,1010 430,1180 430,1280 460,1431', 'C 560,-10 615,10 640,100 670,180 740,190 770,230 720,300 715,350', 'D 180,450 185,560 220,610 190,670 180,830 150,1000 125,1240 120,1431', 'B 450,240 560,225 660,245 720,200 780,150 830,150', 'D 215,0 190,90 180,160'].forEach(s => { stroke(s, '#55290a', 6); stroke(s, DIM, 4); });
['A 52,680 130,683 250,673 350,664 450,676 560,660 700,645 760,632 800,605 870,548 940,541 1000,490 1060,420 1160,335 1220,270 1285,225 1370,212 1430,165 1500,125 B 0,122 90,105 190,92 310,98 370,120 430,155 500,175 560,172 620,100 680,76 740,95 830,147 920,147 990,140 1010,130 1080,175 1160,215 1300,275 1350,300 1385,340 1430,335 1496,250',
 'A 52,270 100,180 130,110 155,63', 'A 1480,63 1520,100', 'A 52,1275 130,1340 180,1420 230,1510 C 270,60 340,95 400,95 470,50 A 560,1475 640,1447 800,1460 920,1440 1000,1490 C 1080,35 1200,130 1260,175 1330,190 1420,175 1568,210 D 60,215 130,260 190,258 240,200 330,190 370,210 430,218 620,205 700,175 810,130 860,80 B 920,1435',
 'D 625,222 620,120 640,30 B 650,1500 750,1440 800,1380 828,1310 815,1200 810,1140 840,1050 880,960 910,910', 'B 545,63 510,100 490,180 460,230 400,265 330,320 300,380 290,440 250,520 240,600 243,690 210,760 150,830', 'D 210,680 270,740 330,820 360,890 430,950 500,1005 600,1020 700,1080 750,1130 780,1200 850,1270 900,1350 1000,1400 1070,1440',
 'B 860,170 850,260 815,300 805,390 850,450 880,510', 'B 580,730 600,730 660,705 710,710 780,760 850,815 920,890 980,900 1060,980 1100,1013 1290,990 1400,988 1470,1025 1500,1025', 'B 890,125 980,120 1020,130 1070,63', 'B 1040,63 1010,130'].forEach(s => stroke(s, HOT, 5));
stroke('D 230,700 330,820 360,895 430,955 500,1012 600,1024 700,1085 760,1150 790,1220 860,1290 900,1350', HOT, 6);
stroke('B 1160,63 1130,100 1070,135 1050,200 980,330 930,430 870,520 830,600 770,640 720,720 690,800 650,900 600,1020 550,1130 500,1250 440,1350 380,1430 300,1510 D 250,50 130,80 0,130 C 1500,140 1440,210 1310,270 1220,360 1100,510 1050,600 1000,700 930,840 900,920 800,1110 770,1200 700,1440', HOT, 8);
stroke('D 240,40 150,80 60,100', HOT, 5);
stroke('C 1000,610 1055,605 1020,640', HOT, 4);
['B 1496,633 1440,633 1400,665 1310,665 1200,700 1100,715 870,680 800,750 760,790 745,960 770,1080 720,1200 690,1400 660,1445 580,1435 490,1500 D 465,100 490,260 430,300 412,450 450,530 600,610'].forEach(s => stroke(s, '#7f8791', 1.800, { 'stroke-dasharray': '18 9' }));
stroke('D 600,610 1496,403', '#7f7f78', 1.800, { 'stroke-dasharray': '20 9' });
stroke('D 1496,880 1480,960 1496,975', '#1f4fa0', 3, { 'stroke-dasharray': '12 6' });

const TOWN = '#d3c39d', CITY = '#dedede', PARK = '#b2deae', SEA = '#6b8cc0', ROAD = '#b3a995';
function place(t, x1, x2, y, text, size, fill, extra) {
  const p = at(t, x1, y);
  return add(map, 'text', Object.assign({ x: p[0], y: p[1], textLength: ((x2 - x1) * .4847).toFixed(1), lengthAdjust: 'spacingAndGlyphs', 'font-family': 'Roboto, sans-serif', 'font-size': size, fill: fill || TOWN, stroke: '#12100c', 'stroke-width': 3, 'paint-order': 'stroke', 'font-style': fill === PARK || fill === SEA ? 'italic' : 'normal' }, extra), text);
}
const turned = (t, x1, x2, y, text, size, fill, deg) => { const p = at(t, x1, y); place(t, x1, x2, y, text, size, fill, { transform: `rotate(${deg} ${p[0]} ${p[1]})` }); };
[['A', 55, 172, 75, 'dsville', 20], ['A', 93, 255, 152, 'Basking', 23], ['A', 118, 215, 208, 'Ridge', 23], ['A', 133, 230, 362, 'Lyons', 22], ['A', 50, 209, 468, 'ernards', 22],
 ['A', 1212, 1385, 98, 'Summit', 25], ['A', 1022, 1102, 223, 'New', 21], ['A', 960, 1165, 273, 'Providence', 21], ['A', 800, 970, 373, 'Berkeley', 23], ['A', 808, 962, 427, 'Heights', 23], ['A', 422, 583, 441, 'Long Hill', 21], ['A', 607, 736, 458, 'Gillette', 21], ['A', 1202, 1452, 473, 'Mountainside', 21],
 ['A', 533, 806, 586, 'Passaic River', 22, PARK], ['A', 533, 780, 642, 'County Park', 22, PARK], ['A', 1286, 1490, 588, 'Westfield', 24], ['A', 1182, 1334, 723, 'Scotch', 24], ['A', 1190, 1325, 782, 'Plains', 24], ['A', 397, 538, 801, 'Warren', 22], ['A', 673, 858, 769, 'Watchung', 21], ['A', 917, 1138, 808, 'Plainfield', 26],
 ['A', 446, 671, 1053, 'Green Brook', 21], ['A', 50, 219, 1091, 'artinsville', 22], ['A', 560, 720, 1187, 'Dunellen', 21], ['A', 938, 1066, 1242, 'South', 24], ['A', 902, 1105, 1301, 'Plainfield', 24], ['A', 412, 617, 1328, 'Middlesex', 23], ['A', 181, 297, 1340, 'Bound', 21], ['A', 187, 292, 1388, 'Brook', 21], ['A', 162, 398, 1467, 'South Bound', 21], ['A', 232, 334, 1516, 'Brook', 21],
 ['B', 182, 335, 72, 'Vauxhall', 20], ['B', -85, 152, 194, 'Springfield', 24], ['B', -73, 140, 251, 'Township', 24], ['B', 577, 778, 140, 'Weequahic', 21], ['B', 320, 457, 257, 'Union', 27, CITY], ['B', 521, 669, 274, 'Hillside', 22], ['B', 1328, 1505, 246, 'Greenville', 21], ['B', 125, 321, 437, 'Kenilworth', 21], ['B', 1178, 1383, 509, 'Bayonne', 26], ['B', 585, 820, 550, 'Elizabeth', 29, CITY], ['B', 870, 1087, 540, 'Newark Bay', 21, SEA],
 ['B', 73, 265, 597, 'Cranford', 24], ['B', 337, 484, 643, 'Roselle', 23], ['B', 1394, 1560, 730, 'St. George', 21], ['B', 1056, 1217, 826, 'Elm Park', 21], ['B', 37, 134, 857, 'Clark', 22], ['B', 426, 573, 907, 'Linden', 24], ['B', 738, 935, 916, 'Bloomfield', 21], ['B', 1387, 1524, 930, 'Tappen', 24, PARK], ['B', 1150, 1325, 955, 'Castleton', 21], ['B', 1166, 1309, 1004, 'Corners', 21], ['B', 896, 1093, 1013, 'Bulls Head', 21],
 ['B', 215, 388, 1026, 'Rahway', 24], ['B', 1271, 1422, 1083, 'Todt Hill', 21], ['B', 669, 883, 1103, 'Kill Van Kull', 21, SEA], ['B', 1365, 1497, 1152, 'Dongan', 21], ['B', 1398, 1476, 1199, 'Hills', 21], ['B', 189, 321, 1263, 'Avenel', 22], ['B', 516, 679, 1290, 'Carteret', 22], ['B', 984, 1150, 1240, 'Staten', 29], ['B', 990, 1145, 1307, 'Island', 29], ['B', -15, 85, 1306, 'Iselin', 21], ['B', 1187, 1367, 1323, 'New Dorp', 21], ['B', 116, 400, 1430, 'Woodbridge', 26, CITY], ['B', 143, 374, 1493, 'Township', 26, CITY], ['B', 935, 1122, 1486, 'Great Kills', 21], ['B', 1191, 1363, 1450, 'Oakwood', 21], ['B', 665, 829, 1515, 'Rossville', 21],
 ['C', 536, 809, 79, 'Piscataway', 25], ['C', 557, 788, 141, 'Township', 25], ['C', 1183, 1402, 83, 'Metuchen', 24], ['C', 608, 817, 276, 'Buccleuch', 22, PARK], ['C', 668, 758, 330, 'Park', 22, PARK], ['C', 914, 1085, 286, 'Edison', 27, CITY], ['C', 1343, 1555, 392, 'Thomas A.', 23, PARK], ['C', 1341, 1582, 446, 'Edison Park', 23, PARK], ['C', 273, 463, 461, 'Franklin', 25], ['C', 255, 484, 524, 'Township', 25], ['C', 709, 813, 525, 'New', 27, CITY], ['C', 638, 885, 588, 'Brunswick', 27, CITY],
 ['C', 1201, 1412, 780, 'Sayreville', 24], ['C', 735, 890, 804, 'Milltown', 21], ['C', 1040, 1271, 885, 'South River', 22], ['C', 93, 240, 945, 'Franklin', 21], ['C', 125, 207, 993, 'Park', 21], ['C', 988, 1091, 980, 'East', 26], ['C', 917, 1166, 1043, 'Brunswick', 26], ['C', 52, 221, 1099, 'ndall Park', 21], ['C', 977, 1183, 1339, 'Spotswood', 21], ['C', 1402, 1592, 1337, 'Old Bridge', 22], ['C', 218, 344, 1377, 'South', 23], ['C', 165, 395, 1434, 'Brunswick', 23], ['C', 52, 110, 1365, 'ore', 21],
 ['D', 22, 124, 137, 'Fords', 21], ['D', 731, 902, 109, 'Woodrow', 21], ['D', 943, 1117, 109, 'Eltingville', 21], ['D', 455, 654, 203, 'Charleston', 21], ['D', 313, 436, 354, 'Perth', 26], ['D', 293, 457, 416, 'Amboy', 26], ['D', 548, 648, 388, 'Long', 22, PARK], ['D', 495, 702, 439, 'Pond Park', 22, PARK], ['D', 160, 280, 596, 'South', 22], ['D', 153, 291, 650, 'Amboy', 22], ['D', 816, 1027, 711, 'Raritan Bay', 21, SEA], ['D', 403, 572, 776, 'Laurence', 21], ['D', 426, 551, 824, 'Harbor', 21],
 ['D', 38, 200, 820, 'Madison', 21], ['D', 78, 160, 867, 'Park', 21], ['D', 783, 1014, 885, 'Union Beach', 21], ['D', 1080, 1297, 926, 'Keansburg', 23], ['D', 446, 620, 960, 'Cliffwood', 21], ['D', 700, 842, 996, 'Keyport', 21], ['D', 541, 730, 1104, 'Aberdeen', 23], ['D', 538, 733, 1156, 'Township', 23], ['D', 1381, 1510, 1056, 'Belford', 21], ['D', -4, 245, 1136, 'Old Bridge', 26], ['D', 8, 238, 1199, 'Township', 26], ['D', 1279, 1535, 1301, 'Middletown', 26], ['D', 220, 435, 1301, 'Geick Park', 22, PARK], ['D', 583, 789, 1305, 'Strathmore', 21],
 ['B', 1483, 1510, 485, 'U', 22, SEA], ['D', 1483, 1510, 193, 'L', 22, SEA]
].forEach(a => place(...a));
[['A', 535, 590, 75, 'Rd', 19, ROAD, 60], ['A', 745, 950, 1113, 'W Front St', 20, ROAD, -42], ['B', 20, 120, 1360, 'Gill Ln', 19, ROAD, 48], ['B', 620, 1010, 1020, 'New Jersey Turnpike', 21, '#ffb36b', -65], ['C', 50, 180, 415, 'nwell Rd', 20, ROAD, 13], ['C', 50, 195, 695, 'aques Ln', 20, ROAD, 14], ['C', 415, 640, 778, 'Lincoln Hwy', 20, '#ffb36b', -47], ['C', 690, 850, 1000, 'Riva Ave', 19, ROAD, -44], ['C', 1005, 1220, 1265, 'Old Stage Rd', 19, ROAD, -23], ['C', 52, 185, 1195, 'New Rd', 19, ROAD, 52],
 ['D', 5, 140, 1425, 'Ferry Rd', 19, ROAD, -16], ['D', 922, 1092, 1045, 'Middle Rd', 20, ROAD, 11], ['D', 1033, 1140, 1140, 'Rte 35', 20, ROAD, 16], ['D', 670, 865, 583, 'New York', 22, '#80724f', -13], ['D', 661, 895, 638, 'New Jersey', 22, '#80724f', -15], ['C', 1222, 1290, 605, 'Rari', 20, SEA, -25], ['C', 1260, 1320, 585, 'tan', 20, SEA, 84], ['C', 1283, 1390, 675, 'River', 20, SEA, -48]].forEach(a => turned(...a));

function shield(t, x, y, kind, text) {
  const [cx, cy] = at(t, x, y), wide = text.length > 2, w = wide ? 21 : 16;
  const g = add(map, 'g', { transform: `translate(${cx} ${cy})` });
  let fill = '#fff';
  if (kind === 'i') {
    add(g, 'path', { d: `M${-w} -8 C${-w - 2} 8 ${-w / 2} 14 0 17 C${w / 2} 14 ${w + 2} 8 ${w} -8Z`, fill: '#3a78cb' });
    add(g, 'path', { d: `M${-w} -10 V-16 L${-w / 2} -14 L0 -16 L${w / 2} -14 L${w} -16 V-10Z`, fill: '#982320' });
    add(g, 'rect', { x: -w, y: -10.5, width: 2 * w, height: 2, fill: '#000' });
    fill = '#000';
  } else if (kind === 'us') {
    add(g, 'path', { d: `M${-w + 3} -15 Q${-w / 2} -12 0 -15 Q${w / 2} -12 ${w - 3} -15 L${w} -9 Q${w - 4} -5 ${w} 1 Q${w} 12 ${w / 2} 13 Q3 13 0 16 Q-3 13 ${-w / 2} 13 Q${-w} 12 ${-w} 1 Q${-w + 4} -5 ${-w} -9Z`, fill: '#000', stroke: '#e5e5e5', 'stroke-width': 1.800 });
  } else if (kind === 'st') add(g, 'rect', { x: -w - 1, y: -13, width: 2 * w + 2, height: 26, rx: 13, fill: '#000', stroke: '#aaa', 'stroke-width': 2 });
  else add(g, 'rect', { x: -20.500, y: -11.500, width: 41, height: 23, fill: '#000', stroke: '#999', 'stroke-width': 2 });
  if (text) add(g, 'text', { x: 0, y: kind === 'i' ? 8 : 7, 'font-family': 'Roboto, sans-serif', 'font-weight': kind === 'i' ? 700 : 400, 'font-size': 19, fill, 'text-anchor': 'middle' }, text);
}
[['A', 1252, 247, 'i', '78'], ['A', 386, 668, 'i', '78'], ['A', 1034, 654, 'us', '22'], ['A', 477, 1156, 'us', '22'], ['A', 955, 941, 'co', '531'], ['A', 1412, 1440, 'st', '27'], ['A', 1050, 1518, 'i', '287'], ['B', 860, 140, 'i', '78'], ['B', 1058, 163, 'i', '95'], ['B', 777, 233, 'st', '27'], ['B', 1372, 155, 'st', '440'], ['B', 625, 658, 'us', '1'], ['B', 810, 790, 'i', '278'], ['B', 1062, 914, 'st', '440'], ['B', 311, 1160, 'us', '9'], ['B', 551, 1139, 'i', '95'], ['B', 810, 1360, 'st', '440'],
 ['C', 1503, 33, 'us', '1'], ['C', 1467, 171, 'i', '95'], ['C', 1083, 381, 'us', '1'], ['C', 559, 529, 'co', '514'], ['C', 625, 708, 'co', '680'], ['C', 740, 704, 'st', '171'], ['C', 526, 860, 'co', '608'], ['C', 538, 978, 'us', '130'], ['C', 914, 880, 'i', '95'], ['C', 208, 1183, 'us', '1'], ['C', 352, 1248, 'co', '679'], ['C', 1330, 1209, 'st', '18'], ['D', 270, 181, 'st', '440'], ['D', 163, 393, 'us', ''], ['D', 472, 1117, 'st', '34'], ['D', 1215, 1226, 'st', '35']].forEach(a => shield(...a));
[['A', 490, 598], ['C', 711, 375], ['C', 1301, 402], ['D', 598, 308], ['D', 327, 1223]].forEach(a => {
  const [x, y] = at(...a);
  add(map, 'circle', { cx: x, cy: y, r: 11, fill: '#000' });
  add(map, 'path', { d: `M${x} ${y - 8} l5 7 h-2 l3.500 5 h-5 v3 h-3 v-3 h-5 l3.500 -5 h-2Z`, fill: '#b4ff4a' });
});

/* driven route, coloured by speed */
const route = (pts, color, dash) => add(map, 'polyline', { points: pts, fill: 'none', stroke: color, 'stroke-width': 14, 'stroke-linecap': dash ? 'butt' : 'round', 'stroke-linejoin': 'round', 'stroke-dasharray': dash || 'none' });
const R_G = '#80ae63', R_Y = '#ffc61c', R_B = '#6ab4c4';
route('2300,1803 2320,1819', R_B);
route('2306,1807 2397,1879', R_Y);
add(map, 'path', { d: 'M2331 1826 q-2 -8 -10 -4', fill: 'none', stroke: R_B, 'stroke-width': 2 });
route('2397,1881 2391,1888', R_B);
route('2398,1878 2400,1879', R_Y);
route('2389,1893 2383,1921 2374,1958 2350,2003 2322,2055 2321,2072 2340,2110 2381,2198 2398,2222', R_G);
route('2399,2222 2412,2238', R_Y); route('2413,2238 2415,2242', R_G); route('2416,2243 2416,2250', R_Y);
route('2417,2258 2407,2291 2407,2354 2410,2386 2403,2418 2412,2445 2428,2474', R_G);
route('2419,2478 2419,2482', R_G); route('2419,2490 2424,2522', R_Y); route('2424,2526 2420,2540', R_G);
route('2422,2545 2395,2526 2388,2534', R_Y); route('2421,2541 2421,2536', R_G);
route('2391,2530 2380,2556', R_B); route('2391,2530 2380,2553', R_Y, '4 5');

function pin(x, y) {
  add(map, 'path', { d: `M${x} ${y} C${x - 1} ${y - 22} ${x - 21} ${y - 38} ${x - 21} ${y - 57} A21 21 0 0 1 ${x + 21} ${y - 57} C${x + 21} ${y - 38} ${x + 1} ${y - 22} ${x} ${y}Z`, fill: '#fb5c54', stroke: '#c0342f', 'stroke-width': 1.500 });
  add(map, 'circle', { cx: x, cy: y - 57, r: 7.500, fill: '#5e0f0c' });
}
pin(2300, 1804); pin(2379, 2552);

/* map controls */
add(map, 'circle', { cx: 1713, cy: 1615, r: 50, fill: '#fff' });
add(map, 'path', { d: 'M1702 1591 l11 -10 l11 10 M1702 1641 l11 10 l11 -10 M1688 1606 l-9 10 l9 10 M1738 1606 l9 10 l-9 10', fill: 'none', stroke: '#8d8d8d', 'stroke-width': 5 });
add(map, 'rect', { x: 1696, y: 1712, width: 32, height: 66, rx: 3, fill: '#fff' });
add(map, 'path', { d: 'M1701 1735 h22 v19 h-5 v14 h-12 v-14 h-5Z', fill: '#f5a81c', stroke: '#b0700a', 'stroke-width': 1.200 });
add(map, 'path', { d: 'M1708 1735 h8 l-4 7Z', fill: '#d94316' });
add(map, 'circle', { cx: 1712, cy: 1726, r: 7.500, fill: '#ffc02c', stroke: '#b0700a', 'stroke-width': 1.200 });
add(map, 'rect', { x: 1711, y: 1838, width: 4, height: 341, fill: '#fff' });
[[1697, 1804, 32, 32], [1698, 1985, 32, 14], [1697, 2179, 32, 32]].forEach(r => add(map, 'rect', { x: r[0], y: r[1], width: r[2], height: r[3], rx: 2, fill: '#fff' }));
add(map, 'path', { d: 'M1705 1820 h16 M1713 1812 v16 M1705 2195 h16', stroke: '#8d8d8d', 'stroke-width': 4 });
line(map, 1706, 1992, 1722, 1992, '#8d8d8d', 2);
add(map, 'rect', { x: 2929, y: 1540, width: 116, height: 30, rx: 2, fill: '#fff' });
place('B', 1265, 1447, 138, 'Trip Map', 21, '#000', { 'font-weight': 500, stroke: 'none' });
add(map, 'text', { x: 1635, y: 2809, 'font-family': 'Liberation Serif', 'font-size': 48, textLength: 119, fill: '#fff', lengthAdjust: 'spacingAndGlyphs' }, 'Google');
add(map, 'rect', { x: 2675, y: 2801, width: 242, height: 26, fill: 'rgba(245,245,245,.7)' });
add(map, 'rect', { x: 2919, y: 2801, width: 136, height: 26, fill: 'rgba(245,245,245,.7)' });
place('D', 735, 1187, 1417, 'Map data ©2013 Google', 20, '#444', { stroke: 'none' });
place('D', 1238, 1475, 1417, 'Terms of Use', 20, '#444', { stroke: 'none' });
```
